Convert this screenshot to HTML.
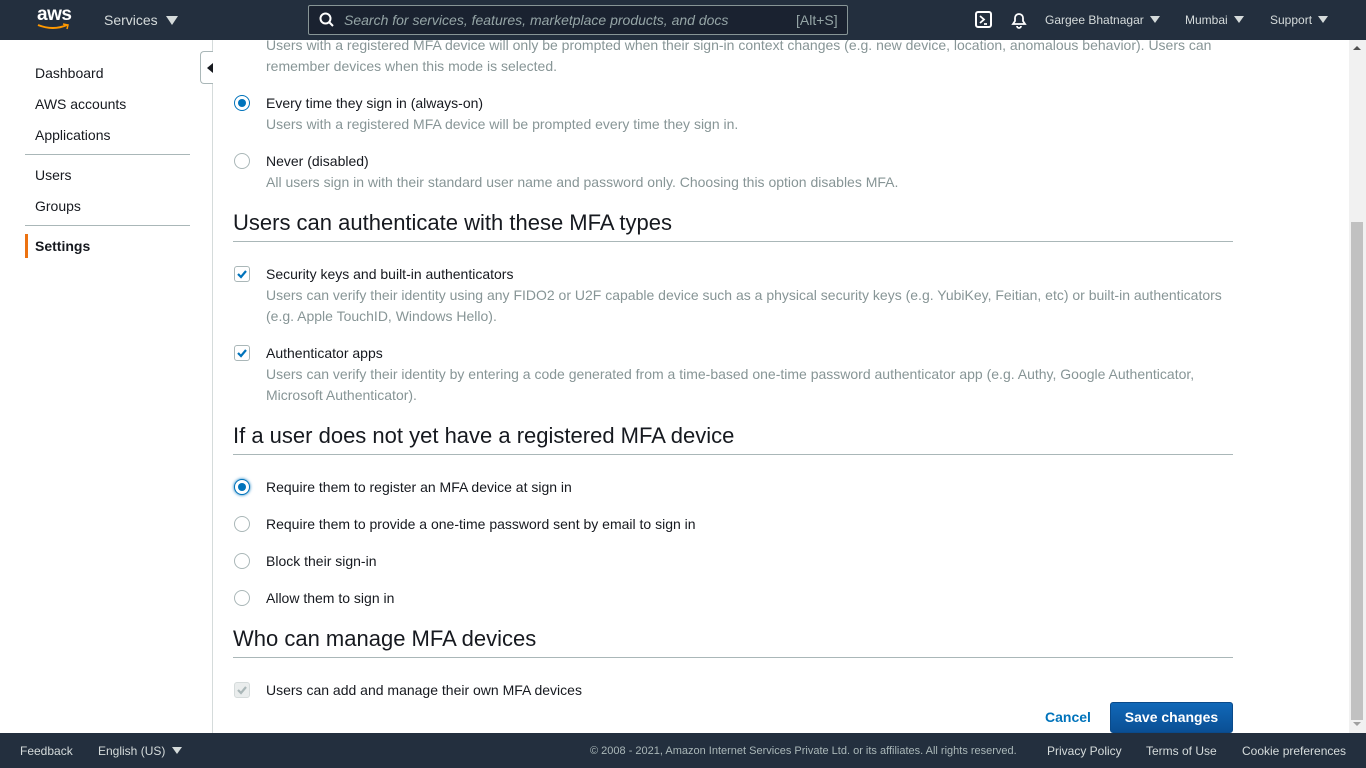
<!DOCTYPE html>
<html><head><style>
*{margin:0;padding:0;box-sizing:border-box}
body{width:1366px;height:768px;overflow:hidden;font-family:"Liberation Sans",sans-serif;background:#fff;position:relative;color:#16191f}
.a{position:absolute;white-space:nowrap}
.hdr{position:absolute;left:0;top:0;width:1366px;height:40px;background:#232f3e;color:#d5dbdb}
.ftr{position:absolute;left:0;top:733px;width:1366px;height:35px;background:#232f3e;color:#d5dbdb;font-size:12px}
.nav{font-size:14px;color:#16191f}
.lbl{font-size:14px;color:#16191f}
.desc{font-size:14px;color:#879596;line-height:21px}
.h{font-size:22px;color:#16191f}
.rule{position:absolute;left:233px;width:1000px;height:1px;background:#aab7b8}
.rad{position:absolute;width:16px;height:16px;border:1px solid #aab7b8;border-radius:50%;background:#fff}
.rad.on{border:1px solid #0073bb}
.rad.on::after{content:"";position:absolute;left:3px;top:3px;width:8px;height:8px;border-radius:50%;background:#0073bb}
.cb{position:absolute;width:16px;height:16px;border:1px solid #aab7b8;border-radius:3px;background:#fff}
.tri{display:inline-block;width:0;height:0;border-left:5px solid transparent;border-right:5px solid transparent;border-top:7px solid #d5dbdb;margin-left:6px;vertical-align:1px}
</style></head><body>
<div class="hdr">
<div class="a" style="left:37px;top:4px;font-size:19px;font-weight:bold;color:#fff;letter-spacing:-0.5px">aws</div>
<svg class="a" style="left:36px;top:23px" width="35" height="8"><path d="M2 2 Q17 8 31 2" stroke="#ff9900" stroke-width="2" fill="none"/><path d="M27 1 L32 2 L31 6" stroke="#ff9900" stroke-width="1.5" fill="none"/></svg>
<div class="a" style="left:104px;top:12px;font-size:14px">Services<span class="tri" style="border-left-width:6px;border-right-width:6px;border-top-width:9px;margin-left:8px;vertical-align:0"></span></div>
<div class="a" style="left:308px;top:5px;width:540px;height:30px;border:1px solid #879596;border-radius:2px;background:#1a2230"></div>
<svg class="a" style="left:319px;top:12px" width="16" height="16"><circle cx="6.5" cy="6.5" r="5" stroke="#fff" stroke-width="2" fill="none"/><path d="M10 10 L14 14" stroke="#fff" stroke-width="2"/></svg>
<div class="a" style="left:344px;top:12px;font-size:14px;font-style:italic;color:#95a5a6">Search for services, features, marketplace products, and docs</div>
<div class="a" style="left:796px;top:12px;font-size:14px;color:#95a5a6">[Alt+S]</div>
<svg class="a" style="left:975px;top:11px" width="17" height="17"><rect x="1" y="1" width="15" height="15" rx="2" stroke="#fff" stroke-width="2" fill="none"/><path d="M5 5 L9 8.5 L5 12 M9 13 H12" stroke="#fff" stroke-width="1.8" fill="none"/></svg>
<svg class="a" style="left:1010px;top:10px" width="18" height="19"><path d="M3 14 L5 11 V8 A4 4 0 0 1 13 8 V11 L15 14 Z" stroke="#fff" stroke-width="1.8" fill="none"/><path d="M7 16 A2 2 0 0 0 11 16" stroke="#fff" stroke-width="1.8" fill="none"/></svg>
<div class="a" style="left:1045px;top:13px;font-size:12px">Gargee Bhatnagar<span class="tri"></span></div>
<div class="a" style="left:1185px;top:13px;font-size:12px">Mumbai<span class="tri"></span></div>
<div class="a" style="left:1270px;top:13px;font-size:12px">Support<span class="tri"></span></div>
</div>

<div class="a" style="left:212px;top:40px;width:1px;height:693px;background:#d5dbdb"></div>
<div class="a" style="left:200px;top:51px;width:13px;height:33px;border:1px solid #aab7b8;border-right:none;border-radius:4px 0 0 4px;background:#fff"></div>
<div class="a" style="left:207px;top:63px;width:0;height:0;border-top:5px solid transparent;border-bottom:5px solid transparent;border-right:6px solid #16191f"></div>
<div class="a nav" style="left:35px;top:65px">Dashboard</div>
<div class="a nav" style="left:35px;top:96px">AWS accounts</div>
<div class="a nav" style="left:35px;top:127px">Applications</div>
<div class="a" style="left:25px;top:154px;width:165px;height:1px;background:#aab7b8"></div>
<div class="a nav" style="left:35px;top:167px">Users</div>
<div class="a nav" style="left:35px;top:198px">Groups</div>
<div class="a" style="left:25px;top:225px;width:165px;height:1px;background:#aab7b8"></div>
<div class="a" style="left:25px;top:234px;width:3px;height:24px;background:#ec7211"></div>
<div class="a nav" style="left:35px;top:238px;font-weight:bold">Settings</div>

<div class="a desc" style="left:266px;top:35px">Users with a registered MFA device will only be prompted when their sign-in context changes (e.g. new device, location, anomalous behavior). Users can<br>remember devices when this mode is selected.</div>
<div class="rad on" style="left:234px;top:95px"></div>
<div class="a lbl" style="left:266px;top:95px">Every time they sign in (always-on)</div>
<div class="a desc" style="left:266px;top:114px">Users with a registered MFA device will be prompted every time they sign in.</div>
<div class="rad" style="left:234px;top:153px"></div>
<div class="a lbl" style="left:266px;top:153px">Never (disabled)</div>
<div class="a desc" style="left:266px;top:172px">All users sign in with their standard user name and password only. Choosing this option disables MFA.</div>

<div class="a h" style="left:233px;top:210px">Users can authenticate with these MFA types</div>
<div class="rule" style="top:241px"></div>
<div class="cb" style="left:234px;top:266px"></div>
<svg class="a" style="left:236px;top:268px" width="12" height="12"><path d="M2 6 L5 9 L10 3" stroke="#0073bb" stroke-width="2.2" fill="none"/></svg>
<div class="a lbl" style="left:266px;top:266px">Security keys and built-in authenticators</div>
<div class="a desc" style="left:266px;top:285px">Users can verify their identity using any FIDO2 or U2F capable device such as a physical security keys (e.g. YubiKey, Feitian, etc) or built-in authenticators<br>(e.g. Apple TouchID, Windows Hello).</div>
<div class="cb" style="left:234px;top:345px"></div>
<svg class="a" style="left:236px;top:347px" width="12" height="12"><path d="M2 6 L5 9 L10 3" stroke="#0073bb" stroke-width="2.2" fill="none"/></svg>
<div class="a lbl" style="left:266px;top:345px">Authenticator apps</div>
<div class="a desc" style="left:266px;top:364px">Users can verify their identity by entering a code generated from a time-based one-time password authenticator app (e.g. Authy, Google Authenticator,<br>Microsoft Authenticator).</div>

<div class="a h" style="left:233px;top:423px">If a user does not yet have a registered MFA device</div>
<div class="rule" style="top:454px"></div>
<div class="rad on" style="left:234px;top:479px;box-shadow:0 0 3px #0073bb"></div>
<div class="a lbl" style="left:266px;top:479px">Require them to register an MFA device at sign in</div>
<div class="rad" style="left:234px;top:516px"></div>
<div class="a lbl" style="left:266px;top:516px">Require them to provide a one-time password sent by email to sign in</div>
<div class="rad" style="left:234px;top:553px"></div>
<div class="a lbl" style="left:266px;top:553px">Block their sign-in</div>
<div class="rad" style="left:234px;top:590px"></div>
<div class="a lbl" style="left:266px;top:590px">Allow them to sign in</div>

<div class="a h" style="left:233px;top:626px">Who can manage MFA devices</div>
<div class="rule" style="top:657px"></div>
<div class="cb" style="left:234px;top:682px;background:#eaeded;border-color:#d5dbdb"></div>
<svg class="a" style="left:236px;top:684px" width="12" height="12"><path d="M2 6 L5 9 L10 3" stroke="#aab7b8" stroke-width="2.2" fill="none"/></svg>
<div class="a lbl" style="left:266px;top:682px">Users can add and manage their own MFA devices</div>

<div class="a" style="left:1045px;top:709px;font-size:14px;font-weight:bold;color:#0073bb">Cancel</div>
<div class="a" style="left:1110px;top:702px;width:123px;height:31px;background:linear-gradient(#1168b8,#0a4f94);border:1px solid #0a4a8a;border-radius:3px;color:#fff;font-size:14px;font-weight:bold;text-align:center;line-height:29px">Save changes</div>

<div class="a" style="left:1349px;top:40px;width:17px;height:693px;background:#f1f1f1"></div>
<div class="a" style="left:1351px;top:222px;width:12px;height:498px;background:#c1c1c1"></div>
<div class="a" style="left:1353px;top:46px;border-left:4px solid transparent;border-right:4px solid transparent;border-bottom:4px solid #505050"></div>
<div class="a" style="left:1353px;top:722px;border-left:4px solid transparent;border-right:4px solid transparent;border-top:4px solid #a0a0a0"></div>

<div class="ftr">
<div class="a" style="left:20px;top:11px">Feedback</div>
<div class="a" style="left:98px;top:11px">English (US)<span class="tri" style="margin-left:7px"></span></div>
<div class="a" style="left:590px;top:12px;font-size:11px;color:#aab7b8">© 2008 - 2021, Amazon Internet Services Private Ltd. or its affiliates. All rights reserved.</div>
<div class="a" style="left:1047px;top:11px">Privacy Policy</div>
<div class="a" style="left:1146px;top:11px">Terms of Use</div>
<div class="a" style="left:1242px;top:11px">Cookie preferences</div>
</div>
</body></html>
